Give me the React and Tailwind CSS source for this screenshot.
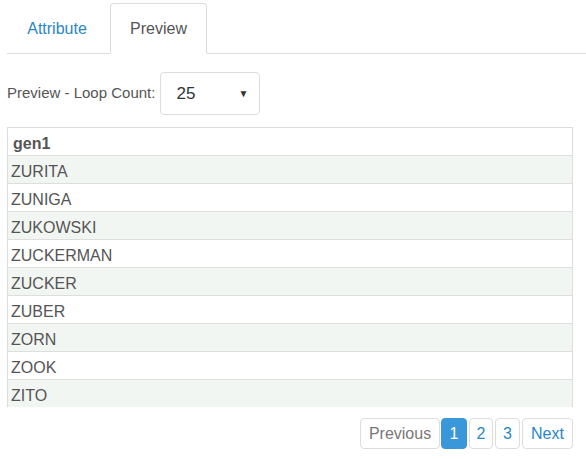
const names = ["ZURITA", "ZUNIGA", "ZUKOWSKI", "ZUCKERMAN", "ZUCKER", "ZUBER", "ZORN", "ZOOK", "ZITO"];

const App = () => {
  return (
    <div className="w-[586px] h-[459px] bg-white pl-[7px] pr-[13px] font-['Liberation_Sans',Arial,sans-serif] text-[#555]">
      <div className="flex items-end h-[54px] border-b border-[#ddd] mr-[-13px]">
        <div className="w-[100px] h-[51px] -mb-px flex items-center justify-center text-[16px] text-[#2a86c8]">
          Attribute
        </div>
        <div className="ml-[3px] w-[97px] h-[51px] -mb-px flex items-center justify-center text-[16px] text-[#555] bg-white border border-[#ddd] border-b-white rounded-t">
          Preview
        </div>
      </div>

      <div className="flex items-center mt-[18px] h-[43px]">
        <span className="text-[15px] text-[#555]">Preview - Loop Count:</span>
        <div className="ml-[5px] w-[100px] h-[43px] border border-[#ddd] rounded flex items-center justify-between pl-[15px] pr-[11px]">
          <span className="text-[17px] text-[#333]">25</span>
          <span className="text-[10px] text-[#333]">▼</span>
        </div>
      </div>

      <div className="mt-[12px] h-[280px] overflow-hidden border-x border-t border-[#ddd]">
        <table className="w-full border-collapse text-[16px]">
          <thead>
            <tr>
              <th className="text-left font-bold pl-[5px] pt-[5px] pb-0 leading-[22px] text-[#555] border-b border-[#ddd]">gen1</th>
            </tr>
          </thead>
          <tbody>
            {names.map((n, i) => (
              <tr key={n} className={i % 2 === 0 ? "bg-[#f2f6f2]" : "bg-white"}>
                <td className="pl-[3px] pt-[5px] pb-px leading-[21px] border-b border-[#ddd] text-[#555]">{n}</td>
              </tr>
            ))}
          </tbody>
        </table>
      </div>

      <div className="flex justify-end mt-[11px] text-[16px]">
        <div className="h-[31px] w-[80px] flex items-center justify-center border border-[#ddd] rounded text-[#777]">Previous</div>
        <div className="ml-px h-[31px] w-[26px] flex items-center justify-center border border-[#3a97d9] bg-[#3a97d9] rounded text-white">1</div>
        <div className="ml-[2px] h-[31px] w-[24px] flex items-center justify-center border border-[#ddd] rounded text-[#2a86c8]">2</div>
        <div className="ml-[2px] h-[31px] w-[25px] flex items-center justify-center border border-[#ddd] rounded text-[#2a86c8]">3</div>
        <div className="ml-[2px] h-[31px] w-[51px] flex items-center justify-center border border-[#ddd] rounded text-[#2a86c8]">Next</div>
      </div>
    </div>
  );
};

export default App;
